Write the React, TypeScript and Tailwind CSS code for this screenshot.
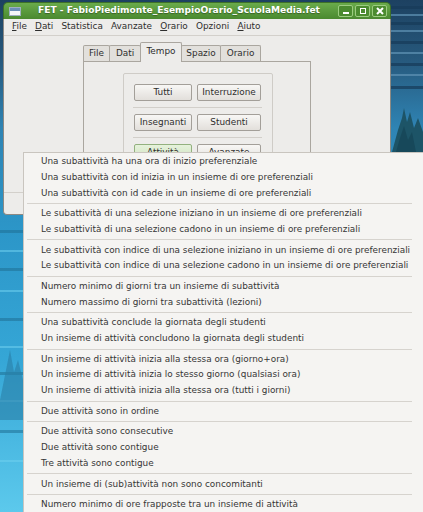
import React from "react";

const groups: string[][] = [
  [
    "Una subattività ha una ora di inizio preferenziale",
    "Una subattività con id inizia in un insieme di ore preferenziali",
    "Una subattività con id cade in un insieme di ore preferenziali",
  ],
  [
    "Le subattività di una selezione iniziano in un insieme di ore preferenziali",
    "Le subattività di una selezione cadono in un insieme di ore preferenziali",
  ],
  [
    "Le subattività con indice di una selezione iniziano in un insieme di ore preferenziali",
    "Le subattività con indice di una selezione cadono in un insieme di ore preferenziali",
  ],
  [
    "Numero minimo di giorni tra un insieme di subattività",
    "Numero massimo di giorni tra subattività (lezioni)",
  ],
  [
    "Una subattività conclude la giornata degli studenti",
    "Un insieme di attività concludono la giornata degli studenti",
  ],
  [
    "Un insieme di attività inizia alla stessa ora (giorno+ora)",
    "Un insieme di attività inizia lo stesso giorno (qualsiasi ora)",
    "Un insieme di attività inizia alla stessa ora (tutti i giorni)",
  ],
  ["Due attività sono in ordine"],
  [
    "Due attività sono consecutive",
    "Due attività sono contigue",
    "Tre attività sono contigue",
  ],
  ["Un insieme di (sub)attività non sono concomitanti"],
  ["Numero minimo di ore frapposte tra un insieme di attività"],
];

function Wallpaper() {
  return (
    <svg
      className="absolute left-0 top-0"
      width="423"
      height="512"
      viewBox="0 0 423 512"
    >
      <defs>
        <linearGradient id="sky" x1="0" y1="0" x2="0" y2="1">
          <stop offset="0" stopColor="#1d4161" />
          <stop offset="0.12" stopColor="#275a7e" />
          <stop offset="0.25" stopColor="#2f84b4" />
          <stop offset="0.45" stopColor="#2c96c8" />
          <stop offset="0.7" stopColor="#35a6d6" />
          <stop offset="1" stopColor="#5cc9ec" />
        </linearGradient>
      </defs>
      <rect width="423" height="512" fill="url(#sky)" />
      {[6, 14, 22, 30, 41, 52, 63, 74, 86].map((y, i) => (
        <rect
          key={i}
          x="380"
          y={y}
          width="43"
          height={i % 2 ? 2 : 3}
          fill={i % 2 ? "#5f93b5" : "#173a58"}
          opacity="0.7"
        />
      ))}
      <polygon
        points="392,152 398,130 402,118 404,108 407,122 410,112 414,128 418,118 423,132 423,152"
        fill="#1d5467"
      />
      <polygon points="396,152 400,138 404,126 408,140 412,132 416,152" fill="#17485a" />
      {[230, 250, 268, 290, 318, 346, 372, 400, 430, 460].map((y, i) => (
        <rect
          key={"l" + i}
          x="0"
          y={y}
          width="23"
          height={i % 2 ? 2 : 3}
          fill={i % 2 ? "#6fd0ef" : "#1f6f93"}
          opacity="0.55"
        />
      ))}
      <polygon points="0,400 6,370 10,350 14,372 18,360 23,380 23,420 0,420" fill="#2a7fa7" opacity="0.6" />
    </svg>
  );
}

function Btn({ label, w, active }: { label: string; w: string; active?: boolean }) {
  return (
    <div
      className={
        "h-[17px] flex items-center justify-center rounded-[2px] border text-[8.9px] text-[#2e2e2e] " +
        w +
        (active
          ? " border-[#93b17f] bg-[linear-gradient(180deg,#e6f2dc,#cfe3bf)]"
          : " border-[#a39f99] bg-[linear-gradient(180deg,#f8f7f5,#e2dfdb)]")
      }
    >
      {label}
    </div>
  );
}

function Tab({ label, w, selected }: { label: string; w: string; selected?: boolean }) {
  return (
    <div
      className={
        "flex items-center justify-center border border-b-0 border-[#aaa69f] rounded-t-[2px] text-[8.9px] text-[#2e2e2e] -ml-px first:ml-0 " +
        w +
        (selected
          ? " h-[20px] bg-[#edecea] relative z-10 pb-[2px]"
          : " h-[16px] bg-[#e2e0dc] mb-px")
      }
    >
      {label}
    </div>
  );
}

export default function App() {
  return (
    <div className="relative w-[423px] h-[512px] overflow-hidden font-['DejaVu_Sans',sans-serif]">
      <Wallpaper />

      {/* Window */}
      <div className="relative ml-[3px] mt-[2px] w-[388px] flex flex-col">
        {/* Title bar */}
        <div className="h-[17px] flex items-center rounded-t-[5px] border border-b-0 border-[#3e7028] bg-[linear-gradient(180deg,#6aab4b,#4a892f)]">
          <div className="ml-[5px] w-[12px] h-[9px] bg-[#f4f6f8] border border-[#9fb0c0] flex flex-col">
            <div className="h-[3px] bg-[#6b8fb8]" />
          </div>
          <div className="ml-[17px] text-[9.1px] font-bold text-white whitespace-nowrap [text-shadow:0_1px_1px_rgba(0,0,0,0.35)]">
            FET - FabioPiedimonte_EsempioOrario_ScuolaMedia.fet
          </div>
          <div className="ml-auto mr-[3px] flex gap-[2px]">
            <div className="w-[15px] h-[12px] rounded-[2px] border border-[#9ccc80] bg-[#4b8b2f] flex items-end justify-center pb-[2px]">
              <div className="w-[6px] h-[2px] bg-white" />
            </div>
            <div className="w-[15px] h-[12px] rounded-[2px] border border-[#9ccc80] bg-[#4b8b2f] flex items-center justify-center">
              <div className="w-[6px] h-[6px] border-[1.5px] border-white" />
            </div>
            <div className="w-[15px] h-[12px] rounded-[2px] border border-[#9ccc80] bg-[#4b8b2f] flex items-center justify-center">
              <svg width="8" height="8" viewBox="0 0 8 8">
                <path d="M1 1 L7 7 M7 1 L1 7" stroke="white" strokeWidth="2" />
              </svg>
            </div>
          </div>
        </div>

        {/* Body */}
        <div className="flex flex-col bg-[#edecea] border border-t-0 border-[#8d8983] rounded-b-[4px]">
          {/* Menubar */}
          <div className="h-[17px] flex items-center pl-[8px] gap-[8.2px] text-[8.9px] text-[#2e2e2e] border-b border-[#d3d0cb]">
            <span>
              <span className="underline">F</span>ile
            </span>
            <span>
              <span className="underline">D</span>ati
            </span>
            <span>Statistica</span>
            <span>Avanzate</span>
            <span>
              <span className="underline">O</span>rario
            </span>
            <span>Opzioni</span>
            <span>
              <span className="underline">A</span>iuto
            </span>
          </div>

          {/* Content */}
          <div className="h-[156px] flex flex-col pt-[7px] pb-[7px] pl-[79px]">
            <div className="flex items-end h-[19px] -mb-px">
              <Tab label="File" w="w-[27px]" />
              <Tab label="Dati" w="w-[32px]" />
              <Tab label="Tempo" w="w-[42px]" selected />
              <Tab label="Spazio" w="w-[40px]" />
              <Tab label="Orario" w="w-[41px]" />
            </div>
            <div className="w-[228px] flex-1 border border-[#aaa69f] pt-[11px] pl-[39px]">
              <div className="w-[150px] h-[120px] border border-[#cfccc7] rounded-[2px] pt-[10px] pl-[10px]">
                <div className="flex gap-[5px]">
                  <Btn label="Tutti" w="w-[58px]" />
                  <Btn label="Interruzione" w="w-[64px]" />
                </div>
                <div className="w-[129px] -ml-px mt-[6px] mb-[6px] h-px bg-[#d2cfca]" />
                <div className="flex gap-[5px]">
                  <Btn label="Insegnanti" w="w-[58px]" />
                  <Btn label="Studenti" w="w-[64px]" />
                </div>
                <div className="w-[129px] -ml-px mt-[6px] mb-[6px] h-px bg-[#d2cfca]" />
                <div className="flex gap-[5px]">
                  <Btn label="Attività" w="w-[58px]" active />
                  <Btn label="Avanzate" w="w-[64px]" />
                </div>
              </div>
            </div>
          </div>

          {/* Status bar */}
          <div className="h-[22px] border-t border-[#d3d0cb]" />
        </div>
      </div>

      {/* Popup menu */}
      <div className="absolute left-[23px] top-[152px] w-[400px] bg-[#f5f4f2] border-l border-t border-[#c9c5bf] pt-px text-[8.9px] text-[#363636]">
        {groups.map((g, gi) => (
          <div key={gi}>
            {gi > 0 && (
              <div className="h-[5px] flex items-center pl-[3px] pr-[11px]">
                <div className="h-px w-full bg-[#d6d3ce]" />
              </div>
            )}
            {g.map((t, ti) => (
              <div key={ti} className="h-[15.7px] flex items-center pl-[17px] whitespace-nowrap">
                {t}
              </div>
            ))}
          </div>
        ))}
      </div>
    </div>
  );
}
